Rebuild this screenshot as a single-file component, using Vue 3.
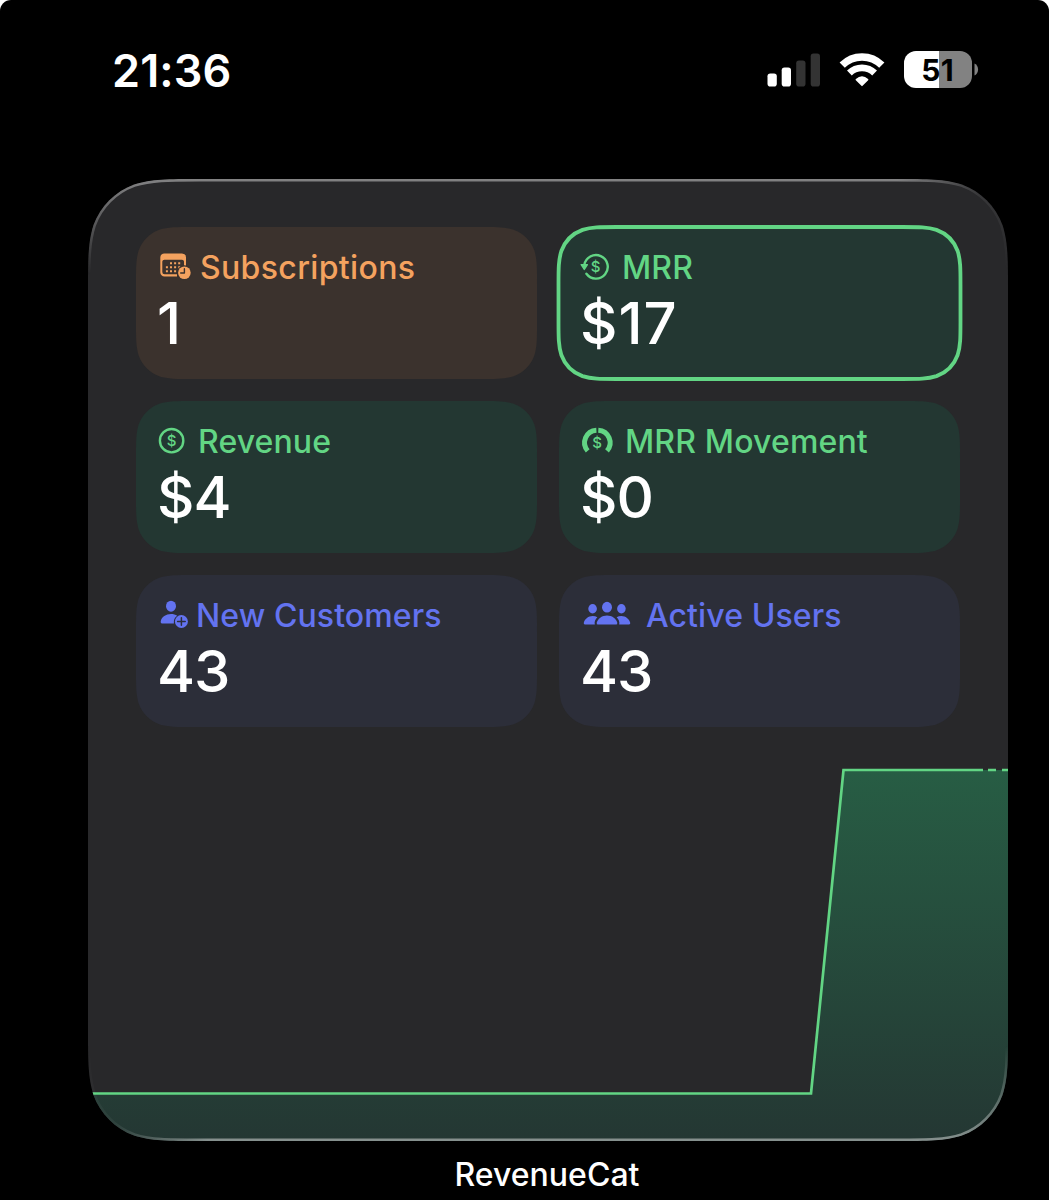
<script setup>
// Rounded rectangle with continuous-curvature corners
function squircle(x, y, w, h, r) {
  const a = 1.528665 * r
  const b = 1.088493 * r
  const c = 0.868407 * r
  const d = 0.631494 * r
  const e = 0.074911 * r
  const f = 0.372824 * r
  const g = 0.16906 * r
  const X = x + w
  const Y = y + h
  return [
    `M${x + a} ${y}L${X - a} ${y}`,
    `C${X - b} ${y} ${X - c} ${y} ${X - d} ${y + e}`,
    `C${X - f} ${y + g} ${X - g} ${y + f} ${X - e} ${y + d}`,
    `C${X} ${y + c} ${X} ${y + b} ${X} ${y + a}`,
    `L${X} ${Y - a}`,
    `C${X} ${Y - b} ${X} ${Y - c} ${X - e} ${Y - d}`,
    `C${X - g} ${Y - f} ${X - f} ${Y - g} ${X - d} ${Y - e}`,
    `C${X - c} ${Y} ${X - b} ${Y} ${X - a} ${Y}`,
    `L${x + a} ${Y}`,
    `C${x + b} ${Y} ${x + c} ${Y} ${x + d} ${Y - e}`,
    `C${x + f} ${Y - g} ${x + g} ${Y - f} ${x + e} ${Y - d}`,
    `C${x} ${Y - c} ${x} ${Y - b} ${x} ${Y - a}`,
    `L${x} ${y + a}`,
    `C${x} ${y + b} ${x} ${y + c} ${x + e} ${y + d}`,
    `C${x + g} ${y + f} ${x + f} ${y + g} ${x + d} ${y + e}`,
    `C${x + c} ${y} ${x + b} ${y} ${x + a} ${y}Z`,
  ].join('')
}

const widgetPath = squircle(0, 0, 920, 962, 73)
const edgePath = squircle(1, 1, 918, 960, 72)
const cardPath = squircle(0, 0, 401, 152, 37)
const ringPath = squircle(-0.5, 0, 402, 152, 38)

const cards = [
  { id: 'subs', label: 'Subscriptions', value: '1', tone: 'orange' },
  { id: 'mrr', label: 'MRR', value: '$17', tone: 'green', selected: true },
  { id: 'revenue', label: 'Revenue', value: '$4', tone: 'green' },
  { id: 'movement', label: 'MRR Movement', value: '$0', tone: 'green' },
  { id: 'customers', label: 'New Customers', value: '43', tone: 'blue' },
  { id: 'users', label: 'Active Users', value: '43', tone: 'blue' },
]
</script>

<template>
  <div class="backdrop">
    <main class="screen">
      <header class="status">
        <span class="time">21:36</span>
        <div class="indicators">
          <svg class="signal" width="54" height="34" viewBox="0 0 54 34">
            <rect x="0.5" y="20.5" width="9.3" height="13" rx="2.8" fill="#fff" />
            <rect x="14.7" y="14.5" width="9.3" height="19" rx="2.8" fill="#fff" />
            <rect x="29.2" y="7.5" width="9.3" height="26" rx="2.8" fill="#333" />
            <rect x="43.7" y="0.5" width="9.3" height="33" rx="2.8" fill="#333" />
          </svg>
          <svg class="wifi" width="46" height="34" viewBox="0 0 46 34">
            <path d="M3.2 12.2A28 28 0 0 1 42.8 12.2" fill="none" stroke="#fff" stroke-width="7.4" />
            <path d="M10.4 20A18 18 0 0 1 35.6 20" fill="none" stroke="#fff" stroke-width="6.8" />
            <path d="M23 32.3L17.4 26.6Q23 21.8 28.6 26.6Z" fill="#fff" stroke="#fff" stroke-width="1.6" stroke-linejoin="round" />
          </svg>
          <div class="battery">
            <div class="cell"><span>51</span></div>
            <svg width="5" height="13" viewBox="0 0 5 13"><path d="M0.5 0.5C5.3 2.5 5.3 10.5 0.5 12.5Z" fill="#828282" /></svg>
          </div>
        </div>
      </header>

      <section class="widget" :style="{ clipPath: `path('${widgetPath}')` }">
        <div class="grid">
          <article v-for="card in cards" :key="card.id" class="card" :class="[card.tone, card.id]">
            <svg class="shape" width="401" height="152" viewBox="0 0 401 152">
              <path :d="card.selected ? ringPath : cardPath" class="fill" :class="{ ring: card.selected }" />
            </svg>
            <div class="head">
              <svg v-if="card.id === 'subs'" class="icon" width="34" height="30" viewBox="0 0 34 30">
                <path fill-rule="evenodd" fill="currentColor" d="M6.5 1.5H24a4 4 0 0 1 4 4V15.5H26V9.5a2 2 0 0 0-2-1.8H6.3a2 2 0 0 0-2 1.8V20a2.3 2.3 0 0 0 2.3 2.3H19v2.3H6.5a4.2 4.2 0 0 1-4.2-4.2V5.5a4 4 0 0 1 4.2-4Z" />
                <path d="M12 11.2h2M16.1 11.2h2M20.2 11.2h2M7.9 15.2h2M12 15.2h2M16.1 15.2h2M20.2 15.2h2M7.9 19.3h2M12 19.3h2M16.1 19.3h2" stroke="currentColor" stroke-width="1.9" />
                <circle cx="26.4" cy="20.8" r="7.6" fill="#3b322d" />
                <circle cx="26.4" cy="20.8" r="6.3" fill="currentColor" />
                <path d="M26.4 16.7V21h-3.7" fill="none" stroke="#3b322d" stroke-width="1.4" stroke-linecap="round" stroke-linejoin="round" />
              </svg>
              <svg v-else-if="card.id === 'mrr'" class="icon" width="34" height="30" viewBox="0 0 34 30">
                <path d="M3.3 13A11.8 11.8 0 1 1 5.4 21.8" fill="none" stroke="currentColor" stroke-width="2.4" stroke-linecap="round" />
                <path d="M0.2 12.6h6.2L3.3 17.4Z" fill="currentColor" stroke="currentColor" stroke-width="1.4" stroke-linejoin="round" />
                <text x="14.6" y="20.4" text-anchor="middle" class="dollar">$</text>
              </svg>
              <svg v-else-if="card.id === 'revenue'" class="icon" width="34" height="30" viewBox="0 0 34 30">
                <circle cx="13.6" cy="14.7" r="11.7" fill="none" stroke="currentColor" stroke-width="2.4" />
                <text x="13.6" y="19.9" text-anchor="middle" class="dollar">$</text>
              </svg>
              <svg v-else-if="card.id === 'movement'" class="icon" width="34" height="30" viewBox="0 0 34 30">
                <path d="M6.7 24.9A12.5 12.5 0 0 1 15.4 4.2" fill="none" stroke="currentColor" stroke-width="5" />
                <path d="M17.3 4.2A12.5 12.5 0 0 1 26 24.9" fill="none" stroke="currentColor" stroke-width="5" />
                <text x="16.1" y="22" text-anchor="middle" class="dollar">$</text>
              </svg>
              <svg v-else-if="card.id === 'customers'" class="icon" width="34" height="30" viewBox="0 0 34 30">
                <ellipse cx="13" cy="6.2" rx="5" ry="5.5" fill="currentColor" />
                <path d="M4 23.4Q2.4 23.4 2.7 21.4C3.6 16.8 8 14 13 14C15.4 14 17.5 14.6 19.2 15.8A8 8 0 0 0 15.9 23.4Z" fill="currentColor" />
                <circle cx="23.4" cy="21.5" r="6.5" fill="currentColor" />
                <path d="M23.4 17.7v7.6M19.6 21.5h7.6" stroke="#2c2e39" stroke-width="1.5" stroke-linecap="round" />
              </svg>
              <svg v-else class="icon" width="52" height="30" viewBox="0 0 52 30">
                <g fill="currentColor">
                  <ellipse cx="26" cy="7.2" rx="5" ry="5.4" />
                  <path d="M17 24.6Q15.2 24.6 15.8 22.4C17 18.2 21.2 15.4 26 15.4S35 18.2 36.2 22.4Q36.8 24.6 35 24.6Z" />
                  <ellipse cx="11.6" cy="8.8" rx="4.3" ry="4.7" />
                  <ellipse cx="40.4" cy="8.8" rx="4.3" ry="4.7" />
                  <path d="M4 24.6Q2.4 24.6 2.8 22.8C3.8 18.8 7.4 16 11.6 16C13.4 16 15 16.4 16.4 17.2C14.5 18.9 13.1 21.4 13.8 24.6Z" />
                  <path d="M48 24.6Q49.6 24.6 49.2 22.8C48.2 18.8 44.6 16 40.4 16C38.6 16 37 16.4 35.6 17.2C37.5 18.9 38.9 21.4 38.2 24.6Z" />
                </g>
              </svg>
              <span class="label">{{ card.label }}</span>
            </div>
            <div class="value">{{ card.value }}</div>
          </article>
        </div>

        <svg class="chart" width="920" height="401" viewBox="0 0 920 401">
          <defs>
            <linearGradient id="area" gradientUnits="userSpaceOnUse" x1="0" y1="30" x2="0" y2="401">
              <stop offset="0" stop-color="#275d44" />
              <stop offset="1" stop-color="#243733" />
            </linearGradient>
          </defs>
          <path d="M0 353.5H723L755.5 30H920V401H0Z" fill="url(#area)" />
          <path d="M0 353.5H723L755.5 30H895" fill="none" stroke="#62d584" stroke-width="2.7" />
          <path d="M900 30H908M914 30H920" stroke="#62d584" stroke-width="2.7" />
        </svg>

        <svg class="edge" width="920" height="962" viewBox="0 0 920 962">
          <defs>
            <linearGradient id="rimTop" gradientUnits="userSpaceOnUse" x1="0" y1="0" x2="0" y2="95">
              <stop offset="0" stop-color="#fff" stop-opacity=".42" />
              <stop offset="1" stop-color="#fff" stop-opacity="0" />
            </linearGradient>
            <linearGradient id="rimBottom" gradientUnits="userSpaceOnUse" x1="0" y1="962" x2="0" y2="867">
              <stop offset="0" stop-color="#fff" stop-opacity=".45" />
              <stop offset="1" stop-color="#fff" stop-opacity="0" />
            </linearGradient>
            <linearGradient id="fadeRight">
              <stop offset="0" stop-color="#fff" />
              <stop offset=".88" stop-color="#fff" />
              <stop offset=".97" stop-color="#333" />
            </linearGradient>
            <linearGradient id="fadeLeft">
              <stop offset=".03" stop-color="#222" />
              <stop offset=".13" stop-color="#fff" />
            </linearGradient>
            <mask id="maskTop"><rect width="920" height="481" fill="url(#fadeRight)" /></mask>
            <mask id="maskBottom"><rect y="481" width="920" height="481" fill="url(#fadeLeft)" /></mask>
          </defs>
          <path :d="edgePath" fill="none" stroke="url(#rimTop)" stroke-width="3" mask="url(#maskTop)" />
          <path :d="edgePath" fill="none" stroke="url(#rimBottom)" stroke-width="3" mask="url(#maskBottom)" />
        </svg>
      </section>

      <footer class="caption">RevenueCat</footer>
    </main>
  </div>
</template>

<style>
body {
  background: #000;
}
</style>

<style scoped>
.backdrop {
  width: 1049px;
  height: 1200px;
  background: #fff;
  overflow: hidden;
}

.screen {
  height: 1200px;
  box-sizing: border-box;
  display: flex;
  flex-direction: column;
  background: #000;
  border-radius: 11px 11px 0 0;
  color: #fff;
  font-family: Inter, "Liberation Sans", sans-serif;
}

.status {
  height: 179px;
  box-sizing: border-box;
  padding: 42px 70.5px 0 112px;
  display: flex;
  justify-content: space-between;
  align-items: flex-start;
}

.time {
  font-size: 45px;
  line-height: 57px;
  font-weight: 600;
  letter-spacing: 0.1px;
}

.indicators {
  height: 55px;
  display: flex;
  align-items: center;
}

.wifi {
  margin-left: 18px;
}

.battery {
  margin-left: 19px;
  display: flex;
  align-items: center;
  gap: 2px;
}

.cell {
  width: 67.5px;
  height: 37px;
  border-radius: 12px;
  background: linear-gradient(90deg, #fff 34.5px, #828282 34.5px);
  color: #000;
  font-size: 30px;
  line-height: 38px;
  font-weight: 700;
  letter-spacing: 0.4px;
  text-align: center;
}

.widget {
  position: relative;
  flex: none;
  width: 920px;
  height: 962px;
  margin-left: 88px;
  display: flex;
  flex-direction: column;
  justify-content: space-between;
  background: #28282a;
}

.grid {
  padding: 47.7px 48px 0;
  display: grid;
  grid-template-columns: 401px 401px;
  grid-auto-rows: 152px;
  gap: 22px;
}

.card {
  position: relative;
  padding: 20px 22px 0;
}

.shape {
  position: absolute;
  inset: 0;
  overflow: visible;
}

.orange { color: #f4a25f; }
.green { color: #62d584; }
.blue { color: #6373f0; }
.orange .fill { fill: #3b322d; }
.green .fill { fill: #233732; }
.blue .fill { fill: #2c2e39; }

.fill.ring {
  stroke: #62d584;
  stroke-width: 3.8px;
}

.head,
.value {
  position: relative;
}

.head {
  height: 40px;
  display: flex;
  align-items: center;
}

.icon {
  flex: none;
  overflow: visible;
}

.dollar {
  fill: currentColor;
  font-size: 15px;
  font-weight: 500;
}

.label {
  padding-top: 2px;
  font-size: 32px;
  line-height: 40px;
  font-weight: 460;
  letter-spacing: 0.1px;
  white-space: nowrap;
}

.subs .label { margin-left: 8px; letter-spacing: 0.35px; }
.mrr .label { margin-left: 7px; }
.revenue .label { margin-left: 6px; }
.movement .label { margin-left: 10px; letter-spacing: 0.15px; }
.customers .label { margin-left: 4px; }
.users .label { margin-left: 13px; }

.value {
  margin: 4px 0 0 -1px;
  color: #fff;
  font-size: 58px;
  line-height: 64px;
  font-weight: 500;
  letter-spacing: -1px;
}

.mrr .value {
  letter-spacing: 1px;
}

.chart {
  flex: none;
  display: block;
}

.edge {
  position: absolute;
  inset: 0;
}

.caption {
  height: 59px;
  padding-top: 14px;
  box-sizing: border-box;
  text-align: center;
  font-size: 32px;
  line-height: 40px;
  font-weight: 500;
  padding-left: 45px;
}
</style>
